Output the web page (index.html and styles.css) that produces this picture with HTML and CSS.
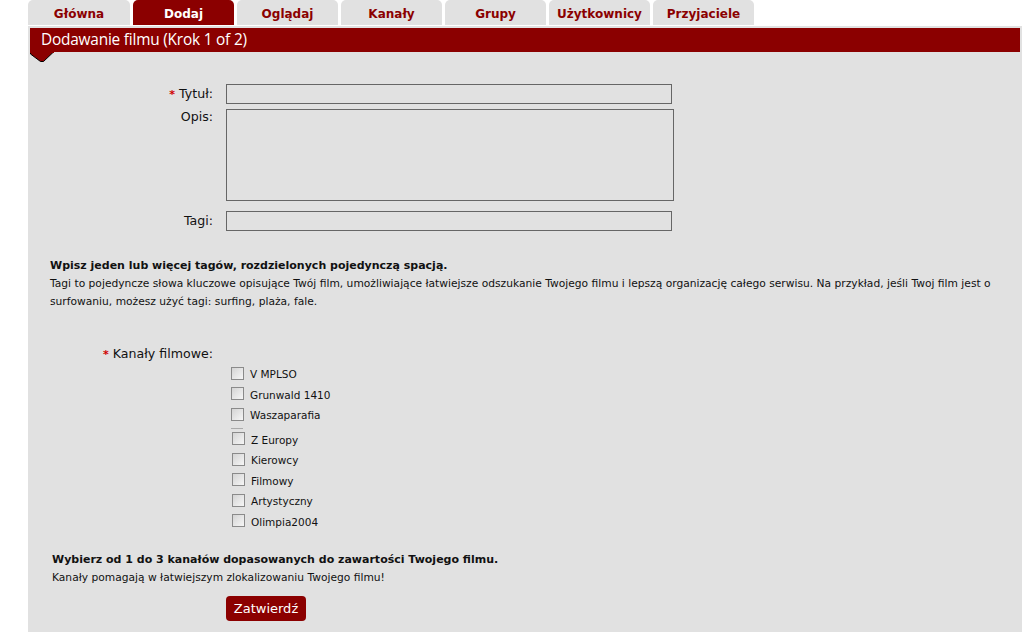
FILE: index.html
```html
<!DOCTYPE html>
<html lang="pl">
<head>
<meta charset="utf-8">
<title>Dodawanie filmu</title>
<link rel="stylesheet" href="styles.css">
</head>
<body>
<div class="page">
  <nav class="tabs">
    <a class="tab">Główna</a>
    <a class="tab active">Dodaj</a>
    <a class="tab">Oglądaj</a>
    <a class="tab">Kanały</a>
    <a class="tab">Grupy</a>
    <a class="tab">Użytkownicy</a>
    <a class="tab">Przyjaciele</a>
  </nav>
  <main class="panel">
    <div class="header">
      <h1>Dodawanie filmu (Krok 1 of 2)</h1>
      <svg class="notch" width="24" height="11" viewBox="0 0 24 11"><polygon points="0.5,0 23.5,0 13.5,9.5 10.5,9.5 0.5,2" fill="#8b0000" stroke="#000" stroke-width="1"/><rect x="0" y="0" width="24" height="1" fill="#8b0000"/></svg>
    </div>
    <form class="form">
      <div class="row row-title">
        <label class="label"><span class="req">*</span> Tytuł:</label>
        <input class="field" type="text">
      </div>
      <div class="row row-desc">
        <label class="label">Opis:</label>
        <textarea class="area"></textarea>
      </div>
      <div class="row row-tags">
        <label class="label">Tagi:</label>
        <input class="field" type="text">
      </div>
      <div class="hint hint-tags">
        <p class="hint-title">Wpisz jeden lub więcej tagów, rozdzielonych pojedynczą spacją.</p>
        <p class="hint-text">Tagi to pojedyncze słowa kluczowe opisujące Twój film, umożliwiające łatwiejsze odszukanie Twojego filmu i lepszą organizację całego serwisu. Na przykład, jeśli Twoj film jest o surfowaniu, możesz użyć tagi: surfing, plaża, fale.</p>
      </div>
      <div class="channels-label label"><span class="req">*</span> Kanały filmowe:</div>
      <ul class="channels">
        <li><input type="checkbox" class="cb"><span>V MPLSO</span></li>
        <li><input type="checkbox" class="cb"><span>Grunwald 1410</span></li>
        <li><input type="checkbox" class="cb"><span>Waszaparafia</span></li>
        <li class="sep"></li>
        <li class="shift"><input type="checkbox" class="cb"><span>Z Europy</span></li>
        <li class="shift"><input type="checkbox" class="cb"><span>Kierowcy</span></li>
        <li class="shift"><input type="checkbox" class="cb"><span>Filmowy</span></li>
        <li class="shift"><input type="checkbox" class="cb"><span>Artystyczny</span></li>
        <li class="shift"><input type="checkbox" class="cb"><span>Olimpia2004</span></li>
      </ul>
      <div class="hint hint-channels">
        <p class="hint-title">Wybierz od 1 do 3 kanałów dopasowanych do zawartości Twojego filmu.</p>
        <p class="hint-text">Kanały pomagają w łatwiejszym zlokalizowaniu Twojego filmu!</p>
      </div>
      <div class="actions">
        <button type="button" class="submit">Zatwierdź</button>
      </div>
    </form>
  </main>
</div>
</body>
</html>
```
FILE: styles.css
```css
html, body {
  margin: 0;
  padding: 0;
  background: #fff;
}
body {
  font-family: "DejaVu Sans", Verdana, sans-serif;
  color: #111;
}
.page {
  margin-left: 28px;
  width: 994px;
}
.tabs {
  display: flex;
  gap: 3px;
  height: 25px;
  margin-bottom: 1px;
}
.tab {
  width: 101px;
  height: 25px;
  background: #e1e1e1;
  border-radius: 5px 5px 0 0;
  display: flex;
  align-items: center;
  justify-content: center;
  font-weight: bold;
  font-size: 12px;
  color: #8b0000;
  text-decoration: none;
  padding-top: 2px;
  box-sizing: border-box;
}
.tab:first-child { width: 102px; }
.tab.active {
  background: #8b0000;
  color: #fff;
}
.panel {
  background: #e1e1e1;
  padding: 2px 2px 12px 2px;
  min-height: 604px;
  box-sizing: border-box;
}
.header {
  position: relative;
}
.header h1 {
  margin: 0;
  height: 24px;
  background: #8b0000;
  color: #fff;
  font-family: "Open Sans", "DejaVu Sans", sans-serif;
  font-weight: normal;
  font-size: 15.4px;
  line-height: 24px;
  padding-left: 11px;
  letter-spacing: -0.2px;
}
.notch {
  position: absolute;
  left: 0;
  top: 24px;
  display: block;
}
.form {
  padding-top: 32px;
}
.row {
  display: flex;
  align-items: flex-start;
}
.label {
  width: 183px;
  flex: none;
  text-align: right;
  font-size: 12.6px;
  line-height: 20px;
  color: #111;
  margin-right: 13px;
}
.req {
  color: #d00000;
  font-weight: bold;
  font-size: 11px;
}
.field {
  width: 446px;
  height: 20px;
  box-sizing: border-box;
  border: 1px solid #666;
  background: #e1e1e1;
  margin: 0;
  padding: 0;
}
.area {
  width: 448px;
  height: 92px;
  box-sizing: border-box;
  border: 1px solid #666;
  background: #e1e1e1;
  margin: 0;
  padding: 0;
  resize: none;
}
.row-desc { margin-top: 4px; }
.row-desc .label { line-height: 16px; }
.row-tags { margin-top: 10px; }
.hint {
  padding-left: 20px;
  padding-right: 20px;
}
.hint p { margin: 0; }
.hint-title {
  font-weight: bold;
  font-size: 11px;
  line-height: 18px;
}
.hint-text {
  font-size: 10.7px;
  line-height: 18px;
}
.hint-tags { margin-top: 26px; }
.channels-label {
  margin-top: 34px;
  line-height: 18px;
}
.channels {
  list-style: none;
  margin: 0;
  padding: 0 0 0 201px;
}
.channels li {
  display: flex;
  align-items: center;
  height: 20.5px;
  font-size: 10.5px;
}
.channels li.sep {
  height: 1px;
  width: 12px;
  border-top: 1px solid #aaa;
  margin-top: 2px;
}
.channels li.shift { padding-left: 1px; }
.cb {
  appearance: none;
  -webkit-appearance: none;
  width: 13px;
  height: 13px;
  margin: 0 6px 2px 0;
  border: 1px solid #8a8a8a;
  background: linear-gradient(135deg, #d4d4d4, #f6f6f6);
  box-sizing: border-box;
}
.hint-channels {
  margin-top: 18px;
  padding-left: 22px;
}
.hint-channels .hint-title { line-height: 19px; }
.actions {
  padding-left: 196px;
  margin-top: 9px;
}
.submit {
  background: #8b0000;
  color: #fff;
  border: none;
  border-radius: 4px;
  width: 80px;
  height: 25px;
  font-family: "DejaVu Sans", sans-serif;
  font-size: 13px;
  padding: 0;
}
```
